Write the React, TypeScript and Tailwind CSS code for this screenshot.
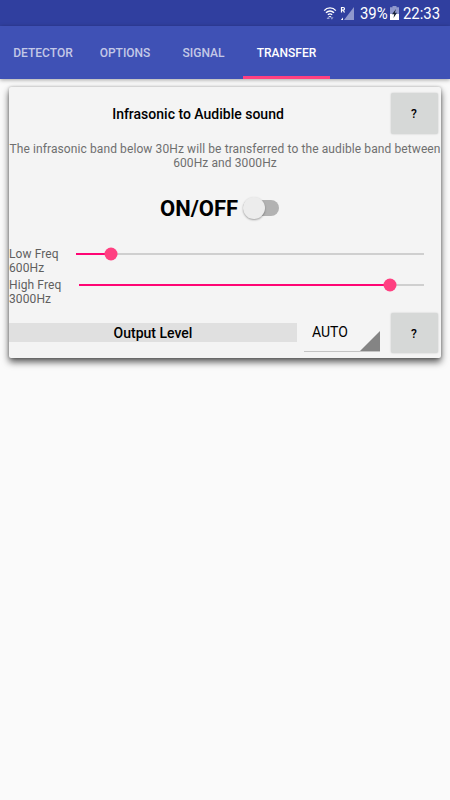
import React from 'react'
import clsx from 'clsx'

const tabs = [
  { label: 'DETECTOR', width: 'w-[86px]' },
  { label: 'OPTIONS', width: 'w-[78px]' },
  { label: 'SIGNAL', width: 'w-[79px]' },
  { label: 'TRANSFER', width: 'w-[87px]' },
]

const StatusBar: React.FC = () => (
  <div className="flex h-[26px] items-center bg-[#303f9f] pl-[323px] text-white">
    <svg className="h-[15px] w-[14px]" viewBox="0 0 14 15" fill="none" stroke="#fff">
      <path d="M1.2 4.6C4.2 1 9.8 1 12.8 4.6" strokeWidth="1.4" />
      <path d="M3 6.8c2.2-2.5 5.8-2.5 8 0" strokeWidth="1.4" />
      <path d="M4.9 8.9c1.2-1.3 3-1.3 4.2 0" strokeWidth="1.4" />
      <path d="M5.500 10h3L7 11.500z" fill="#fff" stroke="none" />
      <path d="M3.6 13l1.7-2.6L6.8 13zM7.3 11.2h3.2l-1.6 2.6z" fill="#97a0d0" stroke="none" />
    </svg>
    <svg className="ml-[3px] h-[15px] w-[15px]" viewBox="0 0 15 15">
      <path d="M14 1v13H4z" fill="#8f98cd" />
      <path d="M1.5 6.500V1.500h1.700a1.200 1.200 0 0 1 0 2.600H1.5M3 4l1.500 2.500" fill="none" stroke="#fff" strokeWidth="1.2" />
      <path d="M3 11.500V14H.8z" fill="#fff" />
    </svg>
    <span className="ml-[5px] w-[26px] origin-left scale-x-[.93] pt-px text-[16px] leading-none whitespace-nowrap">39%</span>
    <svg className="ml-[4px] h-[14px] w-[9px]" viewBox="0 0 9 14">
      <path d="M2.5 0h4v1.3H9V14H0V1.300h2.500z" fill="#8f98cd" />
      <path d="M0 8h9v6H0z" fill="#fff" />
      <path d="M6 3L2 8.2h2.2L3.5 12 7 6.8H4.8z" fill="#172238" />
    </svg>
    <span className="ml-[4px] origin-left scale-x-[.93] pt-px text-[16px] leading-none">22:33</span>
  </div>
)

const HelpButton: React.FC<{ className?: string }> = ({ className }) => (
  <button
    className={clsx(
      'mr-[3px] w-[47px] rounded-[2px] bg-[#d6d8d7] pt-px pr-px text-[12px] font-medium text-black shadow-[0_0_2px_rgba(0,0,0,0.2)]',
      className
    )}
  >
    ?
  </button>
)

interface FreqSliderProps {
  name: string
  freq: string
  percent: number
  trackClass: string
}

const FreqSlider: React.FC<FreqSliderProps> = ({ name, freq, percent, trackClass }) => (
  <div className="flex h-[31px] justify-between pr-[17px]">
    <div className="text-[12px] leading-[14px] tracking-[0.1px] whitespace-nowrap text-[#5f5f5f]">
      <div>{name}</div>
      <div>{freq}</div>
    </div>
    <div className={clsx('relative mt-[6px] h-[2px] bg-[#cfcfcf]', trackClass)}>
      <div className="h-full bg-[#ff0574]" style={{ width: `${percent}%` }} />
      <div
        className="absolute top-1/2 h-[13px] w-[13px] -translate-x-1/2 -translate-y-1/2 rounded-full bg-[#ff4081]"
        style={{ left: `${percent}%` }}
      />
    </div>
  </div>
)

const App: React.FC = () => {
  return (
    <div className="h-[800px] w-[450px] overflow-hidden bg-[#fafafa] font-[Roboto,sans-serif]">
      <StatusBar />

      {/* Tab bar */}
      <nav className="flex h-[53px] bg-[#3f51b5] shadow-[0_1px_4px_rgba(0,0,0,0.35)]">
        {tabs.map(({ label, width }) => (
          <div
            key={label}
            className={clsx(
              'flex items-center justify-center border-y-[3px] border-t-transparent text-[12px] font-medium',
              width,
              label === 'TRANSFER' ? 'border-b-[#ff4081] text-white' : 'border-b-transparent text-white/70'
            )}
          >
            {label}
          </div>
        ))}
      </nav>

      <main className="mx-[9px] mt-[8px] h-[271px] rounded-[2px] bg-[#f4f4f4] shadow-[0_4px_7px_rgba(0,0,0,0.65),0_0_3px_rgba(0,0,0,0.25)]">
        <div className="flex h-[55px] items-start">
          <h1 className="flex h-[54px] flex-1 items-center justify-center pr-[4px] text-[14px] font-medium text-black">
            Infrasonic to Audible sound
          </h1>
          <HelpButton className="mt-[6px] h-[41px]" />
        </div>

        <p className="text-center text-[12px] leading-[14px] tracking-[0.1px] whitespace-nowrap text-[#6f6f6f]">
          The infrasonic band below 30Hz will be transferred to the audible band between
          <br />
          600Hz and 3000Hz
        </p>

        {/* Main switch */}
        <div className="flex h-[76px] items-center pl-[151px]">
          <span className="w-[83px] pt-px text-[22px] font-bold text-black">ON/OFF</span>
          <div className="relative h-[16px] w-[36px] rounded-full bg-[#b2b2b2]">
            <div className="absolute top-[-3px] left-0 h-[22px] w-[22px] rounded-full bg-[#ececec] shadow-[0_1px_2px_rgba(0,0,0,0.35)]" />
          </div>
        </div>

        <div className="mt-px">
          <FreqSlider name="Low Freq" freq="600Hz" percent={10} trackClass="w-[348px]" />
          <FreqSlider name="High Freq" freq="3000Hz" percent={90} trackClass="w-[345px]" />
        </div>

        <div className="flex items-start pt-[4px]">
          <div className="mt-[10px] flex h-[19px] w-[288px] items-center justify-center bg-[#e0e0e0] pt-[2px] text-[14px] font-medium text-black">
            Output Level
          </div>
          <div className="ml-[7px] flex h-[39px] w-[76px] justify-between border-b border-[#c4c4c4]">
            <span className="pt-[9px] pl-[8px] text-[14px] leading-[20px] text-black">AUTO</span>
            <svg className="mt-[18px] h-[20px] w-[20px]" viewBox="0 0 20 20">
              <path d="M20 0v20H0z" fill="#848484" />
            </svg>
          </div>
          <HelpButton className="ml-[11px] h-[40px]" />
        </div>
      </main>
    </div>
  )
}

export default App
